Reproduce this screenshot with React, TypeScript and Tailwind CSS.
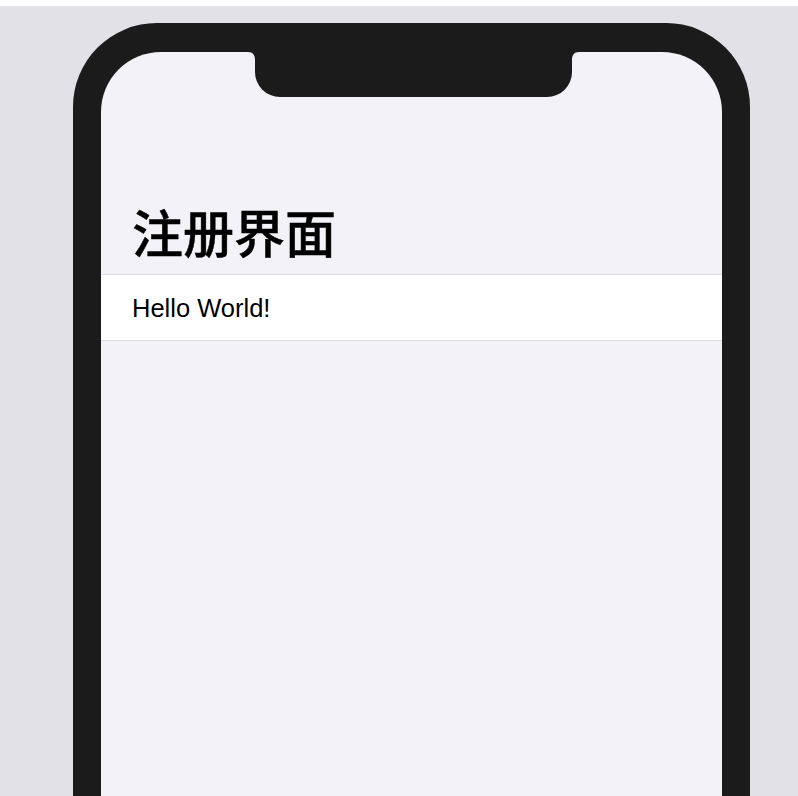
export default function App() {
  return (
    <div className="h-[796px] overflow-hidden bg-white">
      <div className="mt-[6px] h-[790px] overflow-hidden bg-[#e2e2e6] pt-[17px] pl-[73px]">
        <div className="h-[1000px] w-[677px] rounded-[84px] bg-[#1b1b1b] px-[28px] pt-[29px]">
          <div className="relative h-[940px] overflow-hidden rounded-[60px] bg-[#f2f2f7]">
            {/* notch */}
            <svg
              className="absolute left-[147px] top-0"
              width="331"
              height="45"
              viewBox="0 0 331 45"
            >
              <path
                d="M0 0 H331 C326 0 324 3 324 8 V20 A25 25 0 0 1 299 45 H32 A25 25 0 0 1 7 20 V8 C7 3 5 0 0 0 Z"
                fill="#1b1b1b"
              />
            </svg>

            <div className="px-[31px] pt-[149px] pb-[12px]">
              <h1 className="text-[51px] font-medium leading-[61px] text-black [-webkit-text-stroke:0.5px_#000] font-['Noto_Sans_CJK_SC',sans-serif]">
                注册界面
              </h1>
            </div>

            <div className="flex h-[67px] items-center border-y border-[#dcdce0] bg-white px-[31px] pt-[2px]">
              <span className="text-[25.5px] text-black font-['Liberation_Sans',Arial,sans-serif]">
                Hello World!
              </span>
            </div>
          </div>
        </div>
      </div>
    </div>
  );
}
